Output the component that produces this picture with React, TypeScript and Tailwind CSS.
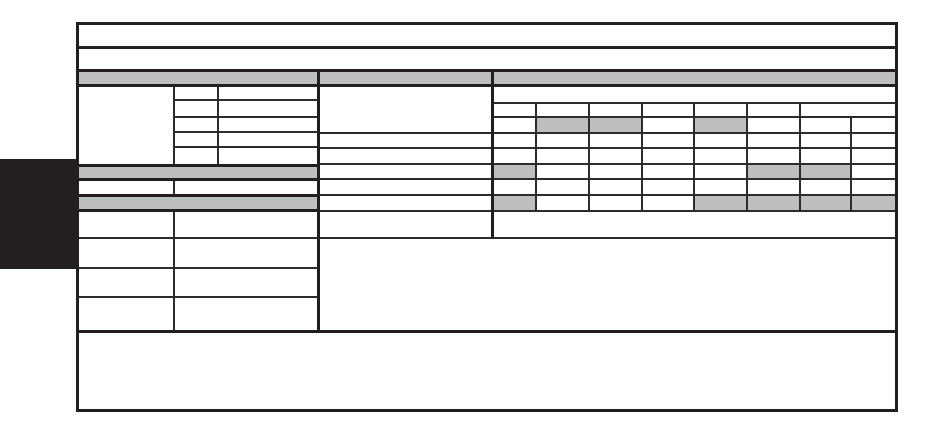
const ink = "#231f20";

const GRAY: Record<number, number[]> = {
  0: [1, 2, 4],
  3: [0, 5, 6],
  5: [0, 4, 5, 6, 7],
};

function Header() {
  return <div className="h-[15px] shrink-0 border-b-[3px] border-[#231f20] bg-[#bcbec0]" />;
}

function GrayBand({ tall }: { tall?: boolean }) {
  return (
    <div
      className={
        tall
          ? "h-[18px] border-y-[3px] border-[#231f20] bg-[#bcbec0]"
          : "h-[17px] border-y-[3px] border-[#231f20] bg-[#bcbec0]"
      }
    />
  );
}

function LeftColumn() {
  return (
    <div className="flex w-[241px] shrink-0 flex-col border-r-[3px] border-[#231f20]">
      <Header />
      <div className="grid grid-cols-[94px_42px_98px] grid-rows-[12px_15px_13px_13px_16px] gap-[2px] bg-[#2e2b2c]">
        <div className="row-span-5 bg-white" />
        {Array.from({ length: 10 }).map((_, i) => (
          <div key={i} className="bg-white" />
        ))}
      </div>
      <GrayBand />
      <div className="grid h-[13px] grid-cols-[94px_142px] gap-[2px] bg-[#2e2b2c]">
        <div className="bg-white" />
        <div className="bg-white" />
      </div>
      <GrayBand tall />
      <div className="grid grid-cols-[94px_142px] grid-rows-[25px_28px_27px_32px] gap-[2px] bg-[#2e2b2c]">
        {Array.from({ length: 8 }).map((_, i) => (
          <div key={i} className="bg-white" />
        ))}
      </div>
    </div>
  );
}

function MiddleColumn() {
  return (
    <div className="flex w-[174px] shrink-0 flex-col border-r-[3px] border-[#231f20]">
      <Header />
      <div className="grid grid-rows-[45px_13px_14px_13px_14px_14px_25px] gap-[2px] bg-[#2e2b2c]">
        {Array.from({ length: 7 }).map((_, i) => (
          <div key={i} className="bg-white" />
        ))}
      </div>
    </div>
  );
}

function RightColumn() {
  return (
    <div className="flex flex-1 flex-col">
      <Header />
      <div className="grid grid-cols-[41px_51px_51px_50px_51px_51px_49px_43px] grid-rows-[15px_12px_14px_13px_14px_13px_14px_14px_25px] gap-[2px] bg-[#2e2b2c]">
        <div className="col-span-8 bg-white" />
        {Array.from({ length: 6 }).map((_, i) => (
          <div key={`h${i}`} className="bg-white" />
        ))}
        <div className="col-span-2 bg-white" />
        {Array.from({ length: 6 }).map((_, r) =>
          Array.from({ length: 8 }).map((_, c) => (
            <div
              key={`${r}-${c}`}
              className={GRAY[r]?.includes(c) ? "bg-[#bcbec0]" : "bg-white"}
            />
          ))
        )}
        <div className="col-span-8 bg-white" />
      </div>
    </div>
  );
}

export default function App() {
  return (
    <div className="flex min-h-[438px] w-[940px] items-start bg-white">
      <div className="mt-[159px] h-[110px] w-[76px] shrink-0" style={{ background: ink }} />
      <div className="mt-[22px] flex h-[390px] w-[822px] flex-col border-[3px] border-[#231f20]">
        <div className="h-[24px] shrink-0 border-b-[3px] border-[#231f20]" />
        <div className="h-[23px] shrink-0 border-b-[3px] border-[#231f20]" />
        <div className="flex h-[261px] shrink-0 border-b-[3px] border-[#231f20]">
          <LeftColumn />
          <div className="flex flex-1 flex-col">
            <div className="flex">
              <MiddleColumn />
              <RightColumn />
            </div>
            <div className="flex-1 border-t-2 border-[#2e2b2c]" />
          </div>
        </div>
        <div className="flex-1" />
      </div>
    </div>
  );
}
